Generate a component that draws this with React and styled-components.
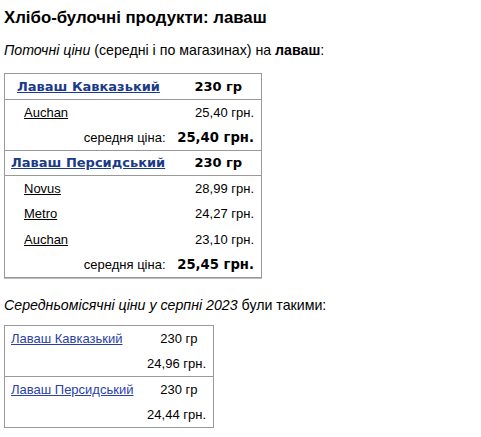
import React from 'react';
import styled, { createGlobalStyle } from 'styled-components';

const GlobalStyle = createGlobalStyle`
  body {
    margin: 0;
    padding: 0 4px;
    background: #fff;
    color: #000;
    font-family: "Liberation Sans", Arial, sans-serif;
    font-size: 14px;
  }
`;

const Title = styled.h1`
  font-size: 16.8px;
  font-weight: bold;
  margin: 8px 0 0;
  line-height: 20px;
`;

const Lead = styled.p`
  font-size: 14.2px;
  margin: ${({ top }) => top}px 0 0;
  line-height: 18px;
`;

const PriceTable = styled.table`
  border-collapse: collapse;
  border: 1px solid #999;
  box-shadow: 0 1px 0 #bbb;
  margin-top: ${({ top }) => top}px;
  width: ${({ width }) => width}px;
  font-size: 13px;
`;

const Row = styled.tr`
  height: 25.5px;
  border-top: ${({ divider }) => (divider ? '1px solid #999' : 'none')};
`;

const Cell = styled.td`
  padding: 0 ${({ padRight }) => padRight ?? 7}px 0 ${({ padLeft }) => padLeft ?? 0}px;
  text-align: ${({ align }) => align || 'left'};
  vertical-align: middle;
  white-space: nowrap;
`;

const ProductLink = styled.a`
  font-family: "DejaVu Sans", Verdana, sans-serif;
  font-weight: bold;
  font-size: 13px;
  color: #1a3a8a;
  text-decoration: underline;
`;

const Weight = styled.span`
  font-family: "DejaVu Sans", Verdana, sans-serif;
  font-weight: bold;
  font-size: 13px;
`;

const ShopLink = styled.a`
  color: #000;
  text-decoration: underline;
`;

const AvgLabel = styled.span`
  font-size: 13px;
`;

const AvgPrice = styled.span`
  font-family: "DejaVu Sans", Verdana, sans-serif;
  font-weight: bold;
  font-size: 13.2px;
`;

const MonthLink = styled.a`
  color: #2a3fa8;
  text-decoration: underline;
`;

const products = [
  {
    name: 'Лаваш Кавказький',
    weight: '230 гр',
    shops: [{ shop: 'Auchan', price: '25,40 грн.' }],
    avg: '25,40 грн.',
  },
  {
    name: 'Лаваш Персидський',
    weight: '230 гр',
    shops: [
      { shop: 'Novus', price: '28,99 грн.' },
      { shop: 'Metro', price: '24,27 грн.' },
      { shop: 'Auchan', price: '23,10 грн.' },
    ],
    avg: '25,45 грн.',
  },
];

const monthly = [
  { name: 'Лаваш Кавказький', weight: '230 гр', price: '24,96 грн.' },
  { name: 'Лаваш Персидський', weight: '230 гр', price: '24,44 грн.' },
];

export default function App() {
  return (
    <>
      <GlobalStyle />
      <Title>Хлібо-булочні продукти: лаваш</Title>
      <Lead top={13}>
        <i>Поточні ціни</i> (середні і по магазинах) на <b>лаваш</b>:
      </Lead>
      <PriceTable top={14} width={258}>
        <tbody>
          {products.map((p, i) => (
            <React.Fragment key={p.name}>
              <Row divider={i > 0}>
                <Cell padLeft={i === 0 ? 12 : 6}>
                  <ProductLink href="#">{p.name}</ProductLink>
                </Cell>
                <Cell align="center" padRight={0}>
                  <Weight>{p.weight}</Weight>
                </Cell>
              </Row>
              <Row divider>
                <Cell padLeft={19}>
                  <ShopLink href="#">{p.shops[0].shop}</ShopLink>
                </Cell>
                <Cell align="right">{p.shops[0].price}</Cell>
              </Row>
              {p.shops.slice(1).map((s) => (
                <Row key={s.shop}>
                  <Cell padLeft={19}>
                    <ShopLink href="#">{s.shop}</ShopLink>
                  </Cell>
                  <Cell align="right">{s.price}</Cell>
                </Row>
              ))}
              <Row>
                <Cell align="right" padRight={10}>
                  <AvgLabel>середня ціна:</AvgLabel>
                </Cell>
                <Cell align="right">
                  <AvgPrice>{p.avg}</AvgPrice>
                </Cell>
              </Row>
            </React.Fragment>
          ))}
        </tbody>
      </PriceTable>
      <Lead top={18}>
        <i>Середньомісячні ціни у серпні 2023</i> були такими:
      </Lead>
      <PriceTable top={11} width={210}>
        <tbody>
          {monthly.map((m, i) => (
            <React.Fragment key={m.name}>
              <Row divider={i > 0}>
                <Cell padLeft={6}>
                  <MonthLink href="#">{m.name}</MonthLink>
                </Cell>
                <Cell align="center" padRight={0}>{m.weight}</Cell>
              </Row>
              <Row>
                <Cell />
                <Cell align="right">{m.price}</Cell>
              </Row>
            </React.Fragment>
          ))}
        </tbody>
      </PriceTable>
    </>
  );
}
